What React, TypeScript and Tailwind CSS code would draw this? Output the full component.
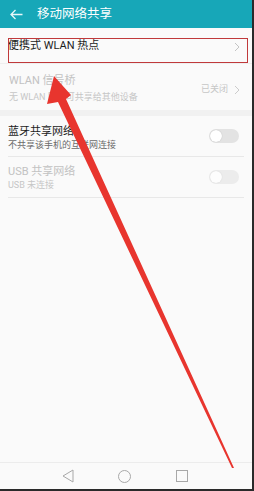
import React from 'react';

function Toggle() {
  return (
    <div className="relative h-[14px] w-[30px] rounded-full bg-[#e3e3e3]">
      <div className="absolute left-[1px] top-[1px] h-[12px] w-[12px] rounded-full bg-white shadow-[0_0_1px_rgba(0,0,0,0.25)]" />
    </div>
  );
}

function Chevron({ color = '#c4c4c4' }: { color?: string }) {
  return (
    <svg width="6" height="10" viewBox="0 0 6 10" fill="none">
      <path d="M1 1l4 4-4 4" stroke={color} strokeWidth="1" />
    </svg>
  );
}

export default function App() {
  return (
    <div
      className="relative flex h-[491px] w-[254px] flex-col overflow-hidden border-r-2 border-b-2 border-r-[#2a2a2a] border-b-[#2a2a2a] bg-[#fafafa]"
      style={{ fontFamily: 'Roboto, "Noto Sans CJK SC", sans-serif' }}
    >
      {/* Header */}
      <div className="flex h-[28px] shrink-0 items-center bg-[#17a7b8] pl-[10px]">
        <svg width="13" height="11" viewBox="0 0 13 11" fill="none">
          <path d="M12.5 5.5H1M5.5 1L1 5.5 5.5 10" stroke="#e8f7f9" strokeWidth="1.3" />
        </svg>
        <span className="ml-[14px] text-[12.5px] leading-none text-white">移动网络共享</span>
      </div>

      {/* Portable hotspot */}
      <div className="flex h-[36px] shrink-0 items-start justify-between border-b border-[#efefef] pl-[8px] pr-[12px] pt-[11px]">
        <span className="text-[11px] leading-[14px] text-[#1c1c1c]">便携式 WLAN 热点</span>
        <div className="pt-[3px]">
          <Chevron />
        </div>
      </div>

      {/* WLAN bridge */}
      <div className="flex h-[46px] shrink-0 items-center justify-between pl-[9px] pr-[12px]">
        <div className="flex flex-col pt-[3px]">
          <span className="text-[11px] leading-[14px] text-[#c2c2c2]">WLAN 信号桥</span>
          <span className="mt-[3px] text-[9px] leading-[12px] text-[#c6c6c6]">无 WLAN 网络可共享给其他设备</span>
        </div>
        <div className="flex items-center gap-[6px] pt-[5px]">
          <span className="text-[9px] text-[#c6c6c6]">已关闭</span>
          <Chevron color="#cccccc" />
        </div>
      </div>

      <div className="h-[6px] shrink-0 bg-[#f1f1f1]" />

      {/* Bluetooth */}
      <div className="mx-[8px] flex h-[41px] shrink-0 items-center justify-between border-b border-[#e8e8e8] pr-[5px]">
        <div className="flex flex-col pt-[3px]">
          <span className="text-[11px] leading-[14px] text-[#1c1c1c]">蓝牙共享网络</span>
          <span className="text-[9px] leading-[12px] text-[#6b6b6b]">不共享该手机的互联网连接</span>
        </div>
        <Toggle />
      </div>

      {/* USB */}
      <div className="mx-[8px] flex h-[41px] shrink-0 items-center justify-between border-b border-[#e8e8e8] pr-[5px]">
        <div className="flex flex-col pt-[2px]">
          <span className="text-[11px] leading-[14px] text-[#c2c2c2]">USB 共享网络</span>
          <span className="text-[9px] leading-[12px] text-[#c6c6c6]">USB 未连接</span>
        </div>
        <div className="opacity-60">
          <Toggle />
        </div>
      </div>

      <div className="flex-1" />

      {/* Nav bar */}
      <div className="flex h-[27px] shrink-0 items-center border-t border-[#ececec] bg-[#fafafa]">
        <div className="ml-[62px]">
          <svg width="12" height="14" viewBox="0 0 12 14" fill="none">
            <path d="M11 1L1 7l10 6z" stroke="#a8a8a8" strokeWidth="1" strokeLinejoin="round" />
          </svg>
        </div>
        <div className="ml-[44px]">
          <svg width="13" height="13" viewBox="0 0 13 13" fill="none">
            <circle cx="6.5" cy="6.5" r="6" stroke="#a8a8a8" strokeWidth="1" />
          </svg>
        </div>
        <div className="ml-[45px]">
          <svg width="12" height="12" viewBox="0 0 12 12" fill="none">
            <rect x="0.5" y="0.5" width="11" height="11" stroke="#a8a8a8" strokeWidth="1" />
          </svg>
        </div>
      </div>

      {/* Annotation: red box */}
      <div className="pointer-events-none absolute left-[8px] top-[38px] h-[25px] w-[240px] border border-[#c0393b]" />

      {/* Annotation: red arrow */}
      <svg className="pointer-events-none absolute left-0 top-0" width="254" height="491" viewBox="0 0 254 491">
        <polygon
          points="54,76 71,95 66,99 234,468 232,468 58,102 47,104"
          fill="#e8352e"
        />
      </svg>
    </div>
  );
}
